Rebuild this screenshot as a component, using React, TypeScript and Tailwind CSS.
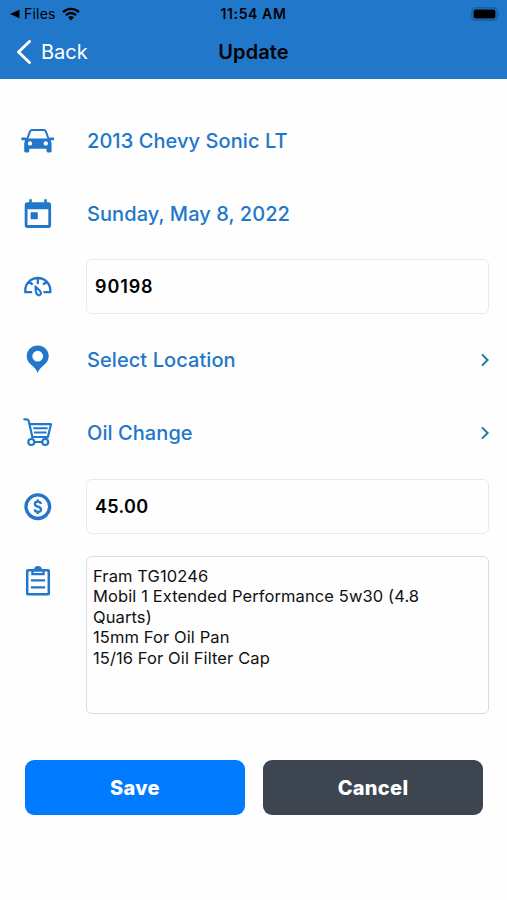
import type { ReactNode } from "react";

const BLUE = "#2277ca";

function Icon({ children }: { children: ReactNode }) {
  return (
    <svg width="36" height="36" viewBox="0 0 36 36" fill="none" stroke={BLUE} className="block shrink-0">
      {children}
    </svg>
  );
}

function CarIcon() {
  return (
    <Icon>
      <path d="M6.8 17 10 8.400Q10.500 7 12 7h11.800Q25.300 7 25.800 8.400L29 17" strokeWidth="2" />
      <path
        fill={BLUE}
        stroke="none"
        fillRule="evenodd"
        d="M1.4 14.400h4l2 1.2h21l2-1.2h3.600v2.900h-3.4q1 1.6 1 3.600v7.200q0 1.300-1.300 1.300h-2.500q-1.300 0-1.300-1.300v-2.300H9.300v2.300q0 1.300-1.300 1.300H5.500q-1.300 0-1.300-1.300V20.900q0-2 1-3.600H1.400zM10 18.200a2.200 2.200 0 1 0 0 4.400 2.200 2.200 0 0 0 0-4.400zm15.800 0a2.200 2.200 0 1 0 0 4.400 2.200 2.200 0 0 0 0-4.400z"
      />
    </Icon>
  );
}

function CalendarIcon() {
  return (
    <Icon>
      <path
        fill={BLUE}
        stroke="none"
        fillRule="evenodd"
        d="M9.2 3.3h2.6v2.9h12.4V3.3h2.6v2.9h1.700q2.6 0 2.6 2.5v20.600q0 2.600-2.600 2.600H7.200q-2.500 0-2.500-2.600V8.700q0-2.500 2.500-2.500h2zM7.500 13.300v15.600h20.800V13.300z"
      />
      <rect x="10.600" y="16.200" width="7.200" height="7" rx=".8" fill={BLUE} stroke="none" />
    </Icon>
  );
}

function GaugeIcon() {
  return (
    <Icon>
      <path
        d="M12.200 23.200H5.300v-1.900a12.500 12.300 0 0 1 25 0v1.900h-6.900M17.800 9.500v5.400M9.400 12.400l3.200 3.400M26.200 12.400l-3 3.400"
        strokeWidth="2.300"
      />
      <path d="M15.400 17.400l4.700 4.700q1.600 2.200.2 3.700-1.600 1.300-3.300-.5-1.300-1.400-1.600-7.900z" strokeWidth="2.100" strokeLinejoin="round" />
    </Icon>
  );
}

function PinIcon() {
  return (
    <Icon>
      <path
        fill={BLUE}
        stroke="none"
        fillRule="evenodd"
        d="M17.700 3.400a10.900 10.900 0 0 1 11 10.800c0 3.800-2.100 6.800-5.300 9.200-2.800 2.200-4.600 4.400-5.700 7.600-1.100-3.200-2.900-5.400-5.700-7.600-3.200-2.400-5.300-5.400-5.300-9.200a10.900 10.900 0 0 1 11-10.800zm0 5.400a5.400 5.400 0 1 0 0 10.800 5.400 5.400 0 0 0 0-10.800z"
      />
    </Icon>
  );
}

function CartIcon() {
  return (
    <Icon>
      <path d="M4.300 4.300h2.500q1.500 0 1.900 1.700l3.700 16h15.500L31 9.200H9.800" strokeWidth="2.200" strokeLinejoin="round" strokeLinecap="round" />
      <path d="M13.300 13.200h14.300M14 17.500h12.600" strokeWidth="1.900" />
      <path d="M12.600 22 11.800 24M27 22l-.6 1.800M14 27h9" strokeWidth="2" />
      <circle cx="11.300" cy="27" r="3" strokeWidth="2.200" />
      <circle cx="25.200" cy="27" r="3" strokeWidth="2.200" />
    </Icon>
  );
}

function DollarIcon() {
  return (
    <Icon>
      <circle cx="17.800" cy="17.700" r="11.800" strokeWidth="3.400" />
      <path
        d="M20.900 14.900q-.5-2.200-3.100-2.200-2.900 0-2.900 2.300 0 1.900 2.900 2.600 3.200.7 3.200 2.800 0 2.400-3.200 2.400-2.900 0-3.200-2.500M17.800 10.500v2.200M17.800 22.600v2.400"
        strokeWidth="2.300"
      />
    </Icon>
  );
}

function ClipboardIcon() {
  return (
    <Icon>
      <rect x="7.200" y="7.300" width="21.600" height="24" rx=".8" strokeWidth="2.500" />
      <path
        fill={BLUE}
        stroke="none"
        fillRule="evenodd"
        d="M11.300 7.400q0-1.300 1.300-1.300h1.500Q14.700 3 18 3t3.900 3.100h1.500q1.300 0 1.300 1.300v4.800H11.300zM13.600 8.400v1.700h8.800V8.400z"
      />
      <path d="M10.900 17.300h14.200M10.900 24.300h14.200" strokeWidth="2.300" />
    </Icon>
  );
}

function Chevron() {
  return (
    <svg width="10" height="14" viewBox="0 0 10 14" fill="none" className="mr-[-1px]">
      <path d="M2 1.4 7.600 7 2 12.600" stroke="#207a9c" strokeWidth="2" />
    </svg>
  );
}

function Row({ icon, children }: { icon: ReactNode; children: ReactNode }) {
  return (
    <div className="flex h-[73.2px] items-center gap-[30px]">
      {icon}
      <div className="flex min-w-0 flex-1 items-center justify-between">{children}</div>
    </div>
  );
}

function Label({ children }: { children: ReactNode }) {
  return <span className="pl-px text-[20px] leading-6 font-medium tracking-[0.07px] text-[#2277ca]">{children}</span>;
}

function Field({ value, tracking }: { value: string; tracking: string }) {
  return (
    <input
      readOnly
      value={value}
      className={`h-[55px] w-full rounded-md border border-[#e9e9e9] px-2 text-[18px] font-semibold text-black outline-none ${tracking}`}
    />
  );
}

export default function App() {
  return (
    <div className="h-[900px] w-[507px] overflow-hidden bg-[#fefefe] font-['Inter','Liberation_Sans',sans-serif]">
      <header className="h-[79px] bg-[#2178ca] text-black">
        <div className="grid h-[27px] grid-cols-3 items-center px-[8px] text-[14px]">
          <div className="flex items-center pl-[2px]">
            <svg width="10" height="10" viewBox="0 0 10 10" className="mr-[4px]">
              <path d="M0 5 9.500.8v8.400z" />
            </svg>
            <span className="tracking-[0.2px]">Files</span>
            <svg width="18" height="14" viewBox="0 0 18 14" fill="none" stroke="black" className="ml-[6px]">
              <path d="M1 5.200a11.500 11.500 0 0 1 16 0M3.900 8.300a7.300 7.300 0 0 1 10.200 0" strokeWidth="2.300" />
              <path d="M9 13.500 6.100 10.500a4.200 4.200 0 0 1 5.800 0z" fill="black" stroke="none" />
            </svg>
          </div>
          <div className="text-center font-semibold tracking-[0.6px]">11:54 AM</div>
          <svg width="30" height="14" viewBox="0 0 30 14" className="mr-[-2px] justify-self-end">
            <rect x=".9" y=".9" width="25.200" height="12.200" rx="3.600" fill="none" stroke="#185a98" strokeWidth="1.300" />
            <rect x="2.600" y="2.600" width="21.800" height="8.800" rx="2" />
            <path d="M27.500 5q1.900 2 0 4z" fill="#185a98" />
          </svg>
        </div>
        <div className="grid h-[50px] grid-cols-3 items-center px-[16px] text-[20px]">
          <div className="flex items-center gap-[10px] text-white">
            <svg width="15" height="24" viewBox="0 0 15 24" fill="none">
              <path d="M13.500 1.500 2.500 12l11 10.500" stroke="white" strokeWidth="2.900" strokeLinecap="round" strokeLinejoin="round" />
            </svg>
            <span>Back</span>
          </div>
          <div className="text-center font-semibold tracking-[0.1px]">Update</div>
        </div>
      </header>

      <main className="pt-[25px] pr-[18px] pl-[20px]">
        <Row icon={<CarIcon />}>
          <Label>2013 Chevy Sonic LT</Label>
        </Row>
        <Row icon={<CalendarIcon />}>
          <Label>Sunday, May 8, 2022</Label>
        </Row>
        <Row icon={<GaugeIcon />}>
          <Field value="90198" tracking="tracking-[0.9px]" />
        </Row>
        <Row icon={<PinIcon />}>
          <Label>Select Location</Label>
          <Chevron />
        </Row>
        <Row icon={<CartIcon />}>
          <Label>Oil Change</Label>
          <Chevron />
        </Row>
        <Row icon={<DollarIcon />}>
          <Field value="45.00" tracking="tracking-[0.3px]" />
        </Row>
        <div className="mt-[12.8px] flex gap-[30px]">
          <div className="pt-[7px]">
            <ClipboardIcon />
          </div>
          <div className="h-[158px] flex-1 rounded-md border border-[#dcdcdc] px-[6px] pt-[9px] text-[16.5px] leading-[20.5px] tracking-[0.1px] text-[#111]">
            <p>Fram TG10246</p>
            <p>
              Mobil 1 Extended Performance 5w30 (4.8
              <br />
              Quarts)
            </p>
            <p>15mm For Oil Pan</p>
            <p>15/16 For Oil Filter Cap</p>
          </div>
        </div>
      </main>

      <footer className="mt-[46px] flex gap-[18px] pr-[24px] pl-[25px] text-[20px] font-extrabold tracking-[0.3px] text-white">
        <button className="h-[55px] flex-1 rounded-[9px] bg-[#007aff] pt-[2px]">Save</button>
        <button className="h-[55px] flex-1 rounded-[9px] bg-[#3d4551] pt-[2px]">Cancel</button>
      </footer>
    </div>
  );
}
